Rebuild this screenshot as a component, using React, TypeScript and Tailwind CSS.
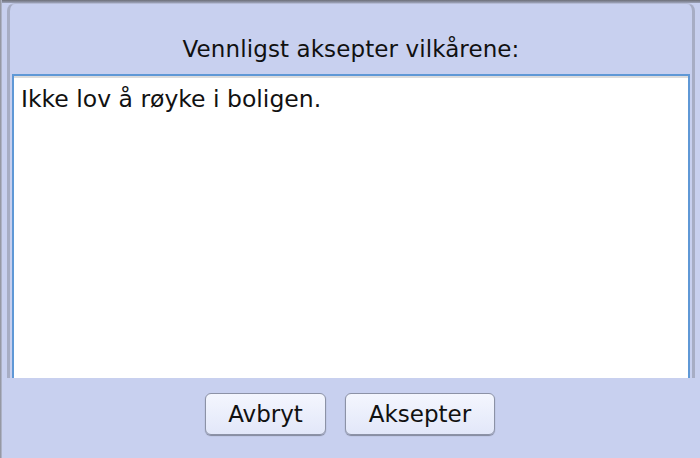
import React from "react";

export default function App() {
  return (
    <div
      className="w-[700px] h-[458px] bg-[#c8d0ef] overflow-hidden flex flex-col relative text-[#111]"
      style={{ fontFamily: '"DejaVu Sans", "Noto Sans", sans-serif' }}
    >
      <div className="absolute left-0 top-0 bottom-0 w-[2px] bg-gradient-to-r from-[#8a8c94] to-[#b9bfd6]" />
      <div className="h-[3px] shrink-0 bg-gradient-to-b from-[#6d6f78] to-[#9da3ba]" />
      <div className="ml-[7px] w-[688px] h-[375px] shrink-0 flex flex-col rounded-t-[8px] border-l-[3px] border-r-[3px] border-t border-l-[#a7adc4] border-r-[#a7adc4] border-t-[#b5bbd4]">
        <div className="h-[70px] shrink-0 flex items-end justify-center pb-[13px] text-[23px] leading-none tracking-[0.1px]">
          Vennligst aksepter vilkårene:
        </div>
        <div className="mx-[2px] flex-1 border-t-2 border-l-2 border-r-2 border-[#5f98d6] bg-white shadow-[inset_0_2px_0_#dcdcdc] pl-[7px] pt-[12px] text-[23.5px] leading-none">
          Ikke lov å røyke i boligen.
        </div>
      </div>
      <div className="flex-1 flex justify-center items-start pt-[15px] gap-[19px]">
        <button className="w-[121px] h-[42px] rounded-[6px] border border-[#8c92a6] bg-gradient-to-b from-[#f4f6fe] to-[#e2e7f9] shadow-[0_1px_1px_rgba(0,0,0,0.35)] text-[23px] leading-none text-[#111]">
          Avbryt
        </button>
        <button className="w-[150px] h-[42px] rounded-[6px] border border-[#8c92a6] bg-gradient-to-b from-[#f4f6fe] to-[#e2e7f9] shadow-[0_1px_1px_rgba(0,0,0,0.35)] text-[23px] leading-none text-[#111]">
          Aksepter
        </button>
      </div>
    </div>
  );
}
